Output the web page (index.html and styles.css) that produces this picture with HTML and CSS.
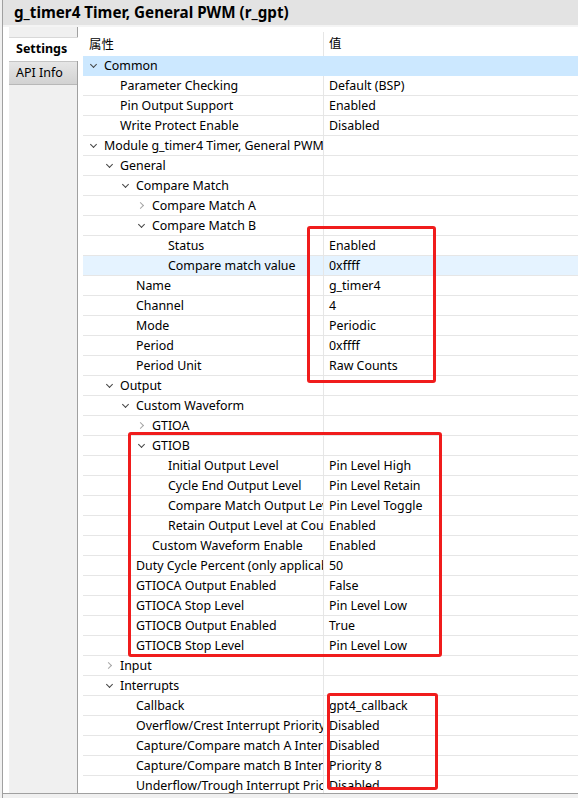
FILE: index.html
```html
<!DOCTYPE html>
<html>
<head>
<meta charset="utf-8">
<link rel="stylesheet" href="styles.css">
</head>
<body>
<div class="frame">
  <div class="title">g_timer4 Timer, General PWM (r_gpt)</div>
  <div class="main">
    <div class="tabs">
      <div class="tab active">Settings</div>
      <div class="tab">API Info</div>
      <div class="tabfill"></div>
    </div>
    <div class="panel">
      <div class="table">
        <div class="row head"><div class="prop">属性</div><div class="val">值</div></div>
        <div class="row sel"><div class="prop l0"><span class="exp open"></span>Common</div><div class="val"></div></div>
        <div class="row"><div class="prop l1"><span class="exp"></span>Parameter Checking</div><div class="val">Default (BSP)</div></div>
        <div class="row"><div class="prop l1"><span class="exp"></span>Pin Output Support</div><div class="val">Enabled</div></div>
        <div class="row"><div class="prop l1"><span class="exp"></span>Write Protect Enable</div><div class="val">Disabled</div></div>
        <div class="row"><div class="prop l0"><span class="exp open"></span>Module g_timer4 Timer, General PWM (r_gpt)</div><div class="val"></div></div>
        <div class="row"><div class="prop l1"><span class="exp open"></span>General</div><div class="val"></div></div>
        <div class="row"><div class="prop l2"><span class="exp open"></span>Compare Match</div><div class="val"></div></div>
        <div class="row"><div class="prop l3"><span class="exp closed"></span>Compare Match A</div><div class="val"></div></div>
        <div class="row"><div class="prop l3"><span class="exp open"></span>Compare Match B</div><div class="val"></div></div>
        <div class="row"><div class="prop l4"><span class="exp"></span>Status</div><div class="val">Enabled</div></div>
        <div class="row hover"><div class="prop l4"><span class="exp"></span>Compare match value</div><div class="val">0xffff</div></div>
        <div class="row"><div class="prop l2"><span class="exp"></span>Name</div><div class="val">g_timer4</div></div>
        <div class="row"><div class="prop l2"><span class="exp"></span>Channel</div><div class="val">4</div></div>
        <div class="row"><div class="prop l2"><span class="exp"></span>Mode</div><div class="val">Periodic</div></div>
        <div class="row"><div class="prop l2"><span class="exp"></span>Period</div><div class="val">0xffff</div></div>
        <div class="row"><div class="prop l2"><span class="exp"></span>Period Unit</div><div class="val">Raw Counts</div></div>
        <div class="row"><div class="prop l1"><span class="exp open"></span>Output</div><div class="val"></div></div>
        <div class="row"><div class="prop l2"><span class="exp open"></span>Custom Waveform</div><div class="val"></div></div>
        <div class="row"><div class="prop l3"><span class="exp closed"></span>GTIOA</div><div class="val"></div></div>
        <div class="row"><div class="prop l3"><span class="exp open"></span>GTIOB</div><div class="val"></div></div>
        <div class="row"><div class="prop l4"><span class="exp"></span>Initial Output Level</div><div class="val">Pin Level High</div></div>
        <div class="row"><div class="prop l4"><span class="exp"></span>Cycle End Output Level</div><div class="val">Pin Level Retain</div></div>
        <div class="row"><div class="prop l4"><span class="exp"></span>Compare Match Output Level</div><div class="val">Pin Level Toggle</div></div>
        <div class="row"><div class="prop l4"><span class="exp"></span>Retain Output Level at Count Stop</div><div class="val">Enabled</div></div>
        <div class="row"><div class="prop l3"><span class="exp"></span>Custom Waveform Enable</div><div class="val">Enabled</div></div>
        <div class="row"><div class="prop l2"><span class="exp"></span>Duty Cycle Percent (only applicable in PWM mode)</div><div class="val">50</div></div>
        <div class="row"><div class="prop l2"><span class="exp"></span>GTIOCA Output Enabled</div><div class="val">False</div></div>
        <div class="row"><div class="prop l2"><span class="exp"></span>GTIOCA Stop Level</div><div class="val">Pin Level Low</div></div>
        <div class="row"><div class="prop l2"><span class="exp"></span>GTIOCB Output Enabled</div><div class="val">True</div></div>
        <div class="row"><div class="prop l2"><span class="exp"></span>GTIOCB Stop Level</div><div class="val">Pin Level Low</div></div>
        <div class="row"><div class="prop l1"><span class="exp closed"></span>Input</div><div class="val"></div></div>
        <div class="row"><div class="prop l1"><span class="exp open"></span>Interrupts</div><div class="val"></div></div>
        <div class="row"><div class="prop l2"><span class="exp"></span>Callback</div><div class="val">gpt4_callback</div></div>
        <div class="row"><div class="prop l2"><span class="exp"></span>Overflow/Crest Interrupt Priority</div><div class="val">Disabled</div></div>
        <div class="row"><div class="prop l2"><span class="exp"></span>Capture/Compare match A Interrupt Priority</div><div class="val">Disabled</div></div>
        <div class="row"><div class="prop l2"><span class="exp"></span>Capture/Compare match B Interrupt Priority</div><div class="val">Priority 8</div></div>
        <div class="row"><div class="prop l2"><span class="exp"></span>Underflow/Trough Interrupt Priority</div><div class="val">Disabled</div></div>
      </div>
    </div>
  </div>
  <div class="bottom"></div>
</div>
<div class="mark m1"></div>
<div class="mark m2"></div>
<div class="mark m3"></div>
</body>
</html>
```
FILE: styles.css
```css
html, body {
  margin: 0;
  padding: 0;
  width: 578px;
  height: 798px;
  overflow: hidden;
  background: #f0f0f0;
  font-family: "Noto Sans", "Noto Sans CJK SC", sans-serif;
  font-size: 12.4px;
  color: #000;
}
.frame {
  position: relative;
  height: 798px;
  margin-left: 2px;
  border-left: 1px solid #a0a0a0;
  display: flex;
  flex-direction: column;
  background: #fff;
}
.title {
  height: 25px;
  line-height: 25px;
  background: #e3e3e3;
  padding-left: 11px;
  font-size: 15.2px;
  font-weight: bold;
  white-space: nowrap;
  overflow: hidden;
  border-bottom: 2px solid #f4f4f4;
  flex: none;
}
.main {
  flex: none;
  height: 766px;
  display: flex;
  overflow: hidden;
}
.tabs {
  width: 68px;
  margin-left: 6px;
  background: #f0f0f0;
  border-right: 1px solid #a0a0a0;
  display: flex;
  flex-direction: column;
  padding-top: 10px;
  flex: none;
}
.tab {
  height: 24px;
  line-height: 22px;
  padding-left: 7px;
  font-size: 12.5px;
  box-sizing: border-box;
  background: linear-gradient(#e6e6e6, #d2d2d2);
  border-top: 1px solid #c4c4c4;
  border-bottom: 1px solid #b8b8b8;
}
.tab.active {
  background: #fff;
  font-weight: bold;
  margin-right: -1px;
  border-top: 1px solid #d8d8d8;
  border-bottom: none;
}
.tabfill { flex: 1; }
.panel {
  flex: 1;
  padding-left: 5px;
  padding-top: 5px;
  overflow: hidden;
}
.table {
  display: flex;
  flex-direction: column;
}
.row {
  display: grid;
  grid-template-columns: 240px 1fr;
  height: 20px;
  line-height: 19px;
  box-sizing: border-box;
  border-bottom: 1px solid #e6e6e6;
  white-space: nowrap;
}
.row.head {
  height: 24px;
  line-height: 23px;
  border-bottom: none;
}
.row.sel { background: #cce8ff; border-bottom-color: #cce8ff; }
.row.hover { background: #e5f3ff; }
.prop {
  overflow: hidden;
  display: flex;
  align-items: center;
}
.head .prop { padding-left: 6px; }
.val {
  overflow: hidden;
  padding-left: 5px;
  border-left: 1px solid #e6e6e6;
}
.row.sel .val { border-left-color: #cce8ff; }
.l0 { padding-left: 5px; }
.l1 { padding-left: 21px; }
.l2 { padding-left: 37px; }
.l3 { padding-left: 53px; }
.l4 { padding-left: 69px; }
.exp {
  width: 16px;
  height: 19px;
  flex: none;
  position: relative;
}
.exp.open::before {
  content: "";
  position: absolute;
  left: 3px;
  top: 6px;
  width: 4px;
  height: 4px;
  border-right: 1.3px solid #444;
  border-bottom: 1.3px solid #444;
  transform: rotate(45deg);
}
.exp.closed::before {
  content: "";
  position: absolute;
  left: 2px;
  top: 7px;
  width: 4px;
  height: 4px;
  border-right: 1.3px solid #a6a6a6;
  border-bottom: 1.3px solid #a6a6a6;
  transform: rotate(-45deg);
}
.bottom {
  flex: 1;
  background: #f0f0f0;
  border-top: 1px solid #a0a0a0;
}
.mark {
  position: absolute;
  border: 3px solid #f01c1c;
  border-radius: 3px;
  box-sizing: border-box;
}
.m1 { left: 307px; top: 226px; width: 129px; height: 157px; }
.m2 { left: 128px; top: 432px; width: 314px; height: 225px; }
.m3 { left: 327px; top: 693px; width: 111px; height: 97px; }
```
